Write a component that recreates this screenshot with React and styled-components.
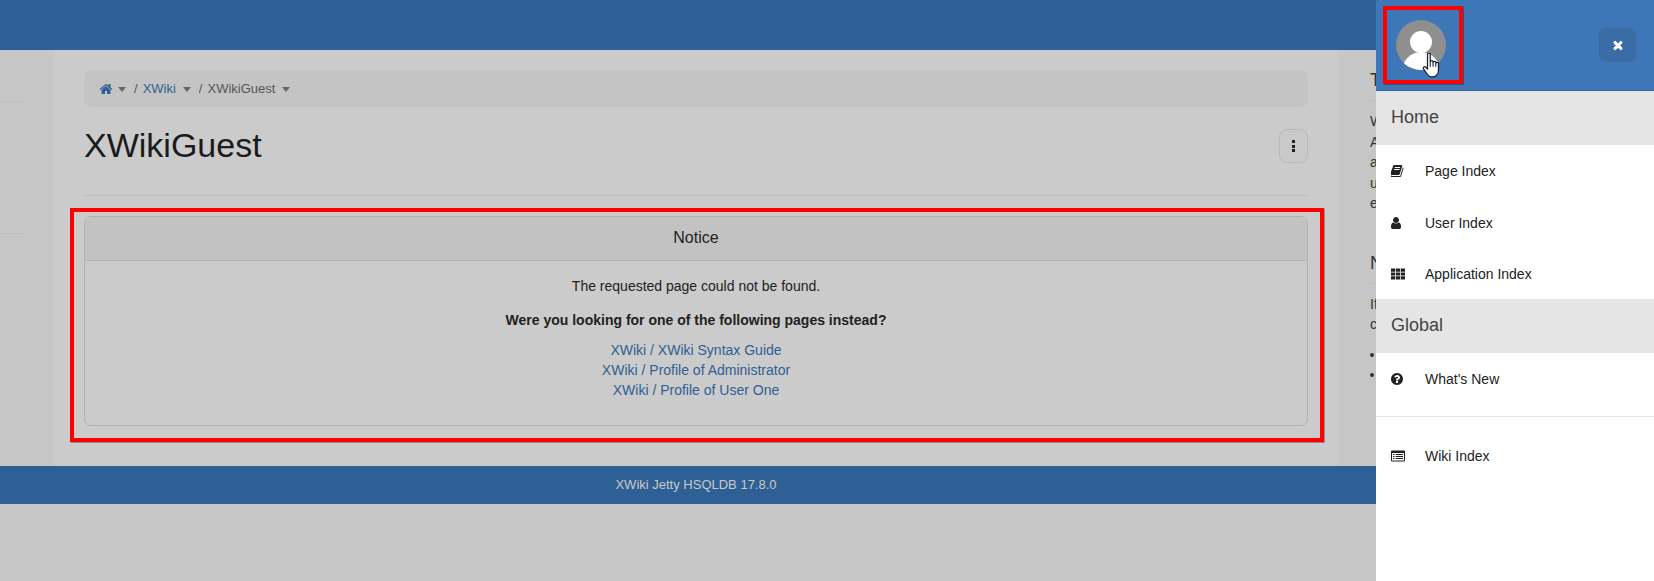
import React from 'react';
import styled, { createGlobalStyle } from 'styled-components';

const ICONS = {
  home: { box: '0 0 1792 1792', w: 14, d: 'M1472 992v480q0 26-19 45t-45 19h-384v-384h-256v384h-384q-26 0-45-19t-19-45v-480q0-1 .5-3t.5-3l575-474 575 474q1 2 1 6zm223-69l-62 74q-8 9-21 11h-3q-13 0-21-7l-692-577-692 577q-12 8-24 7-13-2-21-11l-62-74q-8-10-7-23.5t11-21.5l719-599q32-26 76-26t76 26l244 204v-195q0-14 9-23t23-9h192q14 0 23 9t9 23v408l219 182q10 8 11 21.5t-7 23.5z' },
  times: { box: '256 0 1280 1792', w: 10, d: 'M1490 1322q0 40-28 68l-136 136q-28 28-68 28t-68-28l-294-294-294 294q-28 28-68 28t-68-28l-136-136q-28-28-28-68t28-68l294-294-294-294q-28-28-28-68t28-68l136-136q28-28 68-28t68 28l294 294 294-294q28-28 68-28t68 28l136 136q28 28 28 68t-28 68l-294 294 294 294q28 28 28 68z' },
  book: { box: '128 0 1536 1792', w: 12.5, d: 'M1639 478q40 57 18 129l-275 906q-19 64-76.5 107.5t-122.5 43.5h-923q-77 0-148.5-53.5t-99.5-131.5q-24-67-2-127 0-4 3-27t4-37q1-8-3-21.5t-3-19.5q2-11 8-21t16.5-23.5 16.5-23.5q23-38 45-91.5t30-91.5q3-10 .5-30t-.5-28q3-11 17-28t17-23q21-36 42-92t25-90q1-9-2.5-32t.5-28q4-13 22-30.5t22-22.5q19-26 42.5-84.5t27.5-96.5q1-8-3-25.5t-2-26.5q2-8 9-18t18-23 17-21q8-12 16.5-30.5t15-35 16-36 19.5-32 26.5-23.5 36-11.5 47.5 5.5l-1 3q38-9 51-9h761q74 0 114 56t18 130l-274 906q-36 119-71.5 153.5t-128.5 34.5h-869q-27 0-38 15-11 16-1 43 24 70 144 70h923q29 0 56-15.5t35-41.5l300-987q7-22 5-57 38 15 59 43zm-1064 2q-4 13 2 22.5t20 9.5h608q13 0 25.5-9.5t16.5-22.5l21-64q4-13-2-22.5t-20-9.5h-608q-13 0-25.5 9.5t-16.5 22.5zm-83 256q-4 13 2 22.5t20 9.5h608q13 0 25.5-9.5t16.5-22.5l21-64q4-13-2-22.5t-20-9.5h-608q-13 0-25.5 9.5t-16.5 22.5z' },
  user: { box: '256 0 1280 1792', w: 10, d: 'M1536 1399q0 109-62.5 187t-150.5 78h-854q-88 0-150.5-78t-62.5-187q0-85 8.5-160.5t31.5-152 58.5-131 94-89 134.5-34.5q131 128 313 128t313-128q76 0 134.5 34.5t94 89 58.5 131 31.5 152 8.5 160.5zm-256-887q0 159-112.5 271.5t-271.5 112.5-271.5-112.5-112.5-271.5 112.5-271.5 271.5-112.5 271.5 112.5 112.5 271.5z' },
  help: { box: '128 0 1536 1792', w: 12, d: 'M1024 1376v-192q0-14-9-23t-23-9h-192q-14 0-23 9t-9 23v192q0 14 9 23t23 9h192q14 0 23-9t9-23zm256-672q0-88-55.5-163t-138.5-116-170-41q-243 0-371 213-15 24 8 42l132 100q7 6 19 6 16 0 25-12 53-68 86-92 34-24 86-24 48 0 85.5 26t37.5 59q0 38-20 61t-68 45q-63 28-115.5 86.5t-52.5 125.5v36q0 14 9 23t23 9h192q14 0 23-9t9-23q0-19 21.5-49.5t54.5-49.5q32-18 49-28.5t46-35 44.5-48 28-60.5 12.5-81zm384 192q0 209-103 385.5t-279.5 279.5-385.5 103-385.5-103-279.5-279.5-103-385.5 103-385.5 279.5-279.5 385.5-103 385.5 103 279.5 279.5 103 385.5z' },
  grid: { box: '0 0 14 14', w: 14, d: 'M0 1.5h4.2v3.2H0zM4.9 1.5h4.2v3.2H4.9zM9.8 1.5H14v3.2H9.8zM0 5.4h4.2v3.2H0zM4.9 5.4h4.2v3.2H4.9zM9.8 5.4H14v3.2H9.8zM0 9.3h4.2v3.2H0zM4.9 9.3h4.2v3.2H4.9zM9.8 9.3H14v3.2H9.8z' },
  listAlt: { box: '0 0 14 14', w: 14, d: 'M1 1.5h12a1 1 0 0 1 1 1v9a1 1 0 0 1-1 1H1a1 1 0 0 1-1-1v-9a1 1 0 0 1 1-1zM1 4v7.5h12V4zM2 5h1.5v1H2zM4.5 5H12v1H4.5zM2 7h1.5v1H2zM4.5 7H12v1H4.5zM2 9h1.5v1H2zM4.5 9H12v1H4.5z' },
};

const GlobalStyle = createGlobalStyle`
  html, body {
    margin: 0;
    height: 100%;
    overflow: hidden;
    background: #c6c6c6;
    font-family: "Liberation Sans", Arial, sans-serif;
    font-size: 14px;
    line-height: 20px;
    color: #222;
  }
`;

const Glyph = styled.svg`
  display: block;
  height: 14px;
  width: ${(props) => props.$w}px;
  fill: currentColor;
`;

const Icon = ({ name }) => (
  <Glyph $w={ICONS[name].w} viewBox={ICONS[name].box} preserveAspectRatio="none">
    <path fillRule="evenodd" d={ICONS[name].d} />
  </Glyph>
);

const TopBar = styled.div`
  height: 50px;
  background: #2f6095;
`;

const Columns = styled.div`
  display: flex;
`;

const LeftColumn = styled.div`
  width: 54px;
  flex: none;
  padding-top: 51px;
  box-sizing: border-box;
`;

const SideRule = styled.div`
  width: 22px;
  height: 1px;
  background: #bdbdbd;
  margin-bottom: 131px;
`;

const Main = styled.main`
  width: 1284px;
  flex: none;
  box-sizing: border-box;
  padding: 20px 30px 40px;
  background: #cbcbcb;
`;

const Breadcrumb = styled.div`
  height: 37px;
  display: flex;
  align-items: center;
  padding-left: 15px;
  background: #c4c4c4;
  border-radius: 7px;
  font-size: 13px;
  color: #565656;
`;

const Crumb = styled.span`
  display: flex;
  align-items: center;
  color: ${(props) => (props.$link ? '#2f5f94' : '#565656')};
`;

const Caret = styled.span`
  width: 0;
  height: 0;
  margin: 1px 8px 0 ${(props) => (props.$tight ? 5 : 7)}px;
  border-left: 4px solid transparent;
  border-right: 4px solid transparent;
  border-top: 5px solid #666;
`;

const Slash = styled.span`
  margin-right: 5px;
`;

const TitleRow = styled.div`
  display: flex;
  justify-content: space-between;
  padding: 18px 0 30px;
  border-bottom: 1px solid #bdbdbd;
  margin-bottom: 20px;
`;

const Title = styled.h1`
  margin: 0;
  font-size: 34px;
  font-weight: 400;
  line-height: 40px;
  color: #1b1b1b;
`;

const MenuButton = styled.div`
  width: 29px;
  height: 34px;
  margin-top: 4px;
  box-sizing: border-box;
  display: flex;
  flex-direction: column;
  align-items: center;
  justify-content: center;
  gap: 1.5px;
  background: #c9c9c9;
  border: 1px solid #b9b9b9;
  border-radius: 8px;
`;

const Dot = styled.span`
  width: 3px;
  height: 3px;
  background: #222;
`;

const Notice = styled.section`
  position: relative;
  height: 210px;
  box-sizing: border-box;
  border: 1px solid #b2b2b2;
  border-radius: 7px;
  text-align: center;
`;

const NoticeHead = styled.div`
  height: 44px;
  line-height: 41px;
  font-size: 16px;
  background: #c2c2c2;
  border-bottom: 1px solid #b2b2b2;
  border-radius: 6px 6px 0 0;
  box-sizing: border-box;
`;

const NoticeBody = styled.div`
  padding-top: 15px;
`;

const Para = styled.p`
  margin: 0 0 14px;
  font-weight: ${(props) => (props.$bold ? 700 : 400)};
  &:nth-of-type(2) {
    margin-bottom: 10px;
  }
`;

const PageLink = styled.a`
  display: block;
  color: #2f5f94;
  text-decoration: none;
`;

const Highlight = styled.div`
  position: absolute;
  top: ${(props) => props.$t}px;
  right: ${(props) => props.$r}px;
  bottom: ${(props) => props.$b}px;
  left: ${(props) => props.$l}px;
  border: 4px solid #f00;
  box-shadow: 1px 1px 0 rgba(0, 0, 0, 0.3);
  pointer-events: none;
`;

const RightColumn = styled.aside`
  padding: 20px 0 0 32px;
  width: 316px;
  box-sizing: border-box;
  flex: none;
`;

const SideHeading = styled.div`
  font-size: 18px;
  line-height: 20px;
  padding-bottom: 10px;
  border-bottom: 1px solid #bdbdbd;
  margin-bottom: 10px;
  color: #333;
`;

const SideText = styled.div`
  line-height: 20.5px;
  margin-bottom: 39px;
  color: #333;
`;

const SideList = styled.ul`
  margin: 18px 0 0;
  padding: 0;
  list-style: none;
`;

const SideBullet = styled.li`
  width: 4px;
  height: 4px;
  margin-bottom: 16px;
  background: #333;
  border-radius: 50%;
`;

const Footer = styled.footer`
  height: 38px;
  line-height: 38px;
  font-size: 13px;
  background: #2f6095;
  color: #c9c9c9;
  text-align: center;
  width: 1392px;
`;

const Drawer = styled.nav`
  position: fixed;
  top: 0;
  right: 0;
  bottom: 0;
  width: 278px;
  background: #fff;
  color: #222;
`;

const DrawerHead = styled.div`
  height: 91px;
  box-sizing: border-box;
  display: flex;
  align-items: flex-start;
  justify-content: space-between;
  padding: 20px 18px 0 20px;
  background: #3e77b8;
  border-bottom: 1px solid #35679f;
`;

const AvatarWrap = styled.div`
  position: relative;
  width: 50px;
  height: 50px;
`;

const Avatar = styled.svg`
  display: block;
  width: 50px;
  height: 50px;
`;

const Hand = styled.svg`
  position: absolute;
  left: 26px;
  top: 33px;
  width: 19px;
  height: 25px;
`;

const CloseButton = styled.div`
  width: 37px;
  height: 34px;
  margin-top: 8px;
  display: flex;
  align-items: center;
  justify-content: center;
  background: #3a6ca6;
  border-radius: 6px;
  color: #fff;
`;

const SectionTitle = styled.div`
  height: 54px;
  line-height: 52px;
  padding-left: 15px;
  font-size: 18px;
  background: #e5e5e5;
  color: #444;
`;

const Item = styled.a`
  display: flex;
  align-items: center;
  height: ${(props) => props.$h || 52}px;
  padding-left: 15px;
  color: #222;
`;

const ItemIcon = styled.span`
  width: 34px;
  flex: none;
`;

const DrawerRule = styled.div`
  height: 1px;
  margin: 11px 0 13px;
  background: #e5e5e5;
`;

export default function App() {
  return (
    <>
      <GlobalStyle />
      <TopBar />
      <Columns>
        <LeftColumn>
          <SideRule />
          <SideRule />
        </LeftColumn>
        <Main>
          <Breadcrumb>
            <Crumb $link><Icon name="home" /></Crumb>
            <Caret $tight />
            <Slash>/</Slash>
            <Crumb $link>XWiki</Crumb>
            <Caret />
            <Slash>/</Slash>
            <Crumb>XWikiGuest</Crumb>
            <Caret />
          </Breadcrumb>
          <TitleRow>
            <Title>XWikiGuest</Title>
            <MenuButton>
              <Dot />
              <Dot />
              <Dot />
            </MenuButton>
          </TitleRow>
          <Notice>
            <NoticeHead>Notice</NoticeHead>
            <NoticeBody>
              <Para>The requested page could not be found.</Para>
              <Para $bold>Were you looking for one of the following pages instead?</Para>
              <PageLink>XWiki / XWiki Syntax Guide</PageLink>
              <PageLink>XWiki / Profile of Administrator</PageLink>
              <PageLink>XWiki / Profile of User One</PageLink>
            </NoticeBody>
            <Highlight $t={-9} $r={-17} $b={-17} $l={-15} />
          </Notice>
        </Main>
        <RightColumn>
          <SideHeading>Tips</SideHeading>
          <SideText>
            W<br />A<br />a<br />u<br />e
          </SideText>
          <SideHeading>N</SideHeading>
          <SideText>
            If<br />c
            <SideList>
              <SideBullet />
              <SideBullet />
            </SideList>
          </SideText>
        </RightColumn>
      </Columns>
      <Footer>XWiki Jetty HSQLDB 17.8.0</Footer>
      <Drawer>
        <DrawerHead>
          <AvatarWrap>
            <Avatar viewBox="0 0 50 50">
              <defs>
                <clipPath id="avatar-clip">
                  <circle cx="25" cy="25" r="25" />
                </clipPath>
              </defs>
              <circle cx="25" cy="25" r="25" fill="#8f8f8f" />
              <g clipPath="url(#avatar-clip)" fill="#fff">
                <circle cx="25" cy="22" r="11" />
                <ellipse cx="25" cy="52" rx="19" ry="20" />
              </g>
            </Avatar>
            <Hand viewBox="0.5 1 16.5 23.5">
              <path
                d="M5 2.2c0-1.6 2.6-1.6 2.6 0V9c0-1.2 2.6-1.2 2.6 0v.8c0-1.2 2.6-1.2 2.6 0v.8c0-1.1 2.5-1 2.5.2v6.7c0 3-2 6-5.3 6H9c-2.3 0-3.4-1.3-4.6-3L1.3 16c-.9-1.5 1-2.8 2.1-1.6L5 16.2z"
                fill="#fff"
                stroke="#1a2230"
                strokeWidth="1.2"
                strokeLinejoin="round"
              />
              <path d="M7.6 9v5M10.2 9.8V14M12.8 10.6V14" stroke="#1a2230" strokeWidth="1" fill="none" />
            </Hand>
            <Highlight $t={-14} $r={-17} $b={-14} $l={-13} />
          </AvatarWrap>
          <CloseButton><Icon name="times" /></CloseButton>
        </DrawerHead>
        <SectionTitle>Home</SectionTitle>
        <Item>
          <ItemIcon><Icon name="book" /></ItemIcon>
          Page Index
        </Item>
        <Item>
          <ItemIcon><Icon name="user" /></ItemIcon>
          User Index
        </Item>
        <Item $h={50}>
          <ItemIcon><Icon name="grid" /></ItemIcon>
          Application Index
        </Item>
        <SectionTitle>Global</SectionTitle>
        <Item>
          <ItemIcon><Icon name="help" /></ItemIcon>
          What's New
        </Item>
        <DrawerRule />
        <Item>
          <ItemIcon><Icon name="listAlt" /></ItemIcon>
          Wiki Index
        </Item>
      </Drawer>
    </>
  );
}
